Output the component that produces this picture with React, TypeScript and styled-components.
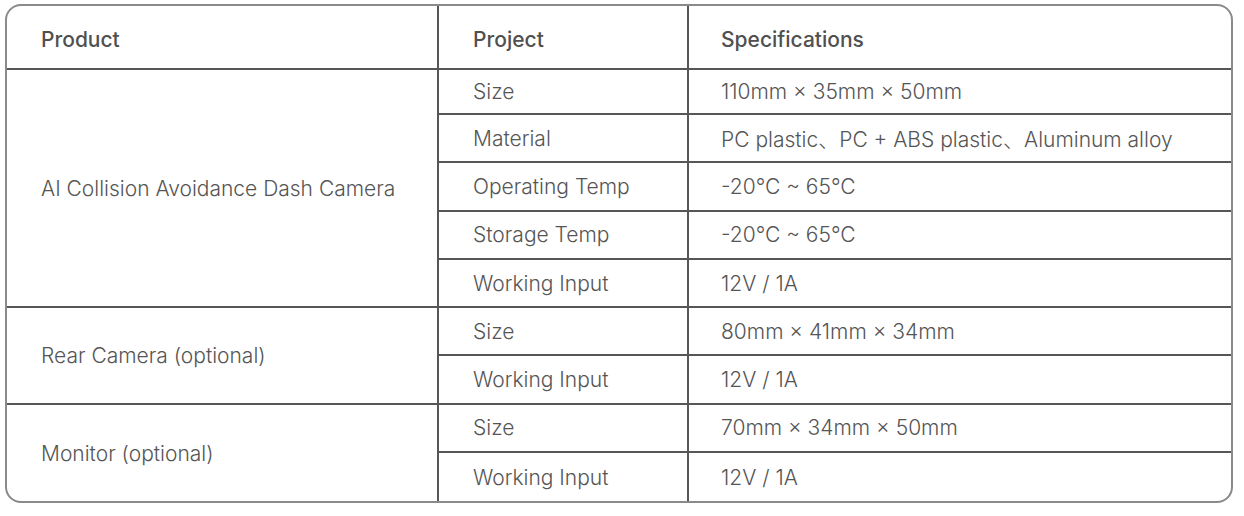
import React from "react";
import styled, { createGlobalStyle } from "styled-components";

interface SpecRow {
  project: string;
  value: string;
}

interface ProductGroup {
  product: string;
  rows: SpecRow[];
}

const groups: ProductGroup[] = [
  {
    product: "AI Collision Avoidance Dash Camera",
    rows: [
      { project: "Size", value: "110mm × 35mm × 50mm" },
      { project: "Material", value: "PC plastic、PC + ABS plastic、Aluminum alloy" },
      { project: "Operating Temp", value: "-20℃ ~ 65℃" },
      { project: "Storage Temp", value: "-20℃ ~ 65℃" },
      { project: "Working Input", value: "12V / 1A" }
    ]
  },
  {
    product: "Rear Camera (optional)",
    rows: [
      { project: "Size", value: "80mm × 41mm × 34mm" },
      { project: "Working Input", value: "12V / 1A" }
    ]
  },
  {
    product: "Monitor (optional)",
    rows: [
      { project: "Size", value: "70mm × 34mm × 50mm" },
      { project: "Working Input", value: "12V / 1A" }
    ]
  }
];

const GlobalStyle = createGlobalStyle`
  body {
    margin: 0;
    background: #ffffff;
    font-family: Inter, "Noto Sans", "Noto Sans CJK SC", sans-serif;
  }
`;

const FrameStyled = styled.div`
  margin: 4px 0 0 5px;
  width: 1228px;
  border: 2px solid #8a8a8a;
  border-radius: 16px;
  overflow: hidden;
  box-sizing: border-box;
`;

const TableStyled = styled.table`
  width: 100%;
  border-collapse: separate;
  border-spacing: 0;
  table-layout: fixed;
`;

const HeadCell = styled.th<{ $pad: number; $last?: boolean }>`
  height: 64px;
  box-sizing: border-box;
  padding: 4px 0 0 ${(p) => p.$pad}px;
  text-align: left;
  font-size: 21px;
  font-weight: 500;
  color: #505050;
  border-bottom: 2px solid #565656;
  border-right: ${(p) => (p.$last ? "none" : "2px solid #565656")};
`;

const RowStyled = styled.tr<{ $first?: boolean }>`
  height: ${(p) => (p.$first ? 45 : 48.3)}px;
`;

const Cell = styled.td<{ $pad: number; $last?: boolean; $noBottom?: boolean }>`
  padding: 0 0 0 ${(p) => p.$pad}px;
  font-size: 21px;
  font-weight: 300;
  color: #555555;
  white-space: nowrap;
  border-bottom: ${(p) => (p.$noBottom ? "none" : "2px solid #565656")};
  border-right: ${(p) => (p.$last ? "none" : "2px solid #565656")};
`;

const App = () => (
  <>
    <GlobalStyle />
    <FrameStyled>
      <TableStyled>
        <colgroup>
          <col style={{ width: 432 }} />
          <col style={{ width: 250 }} />
          <col />
        </colgroup>
        <thead>
          <tr>
            <HeadCell $pad={34}>Product</HeadCell>
            <HeadCell $pad={34}>Project</HeadCell>
            <HeadCell $pad={32} $last>
              Specifications
            </HeadCell>
          </tr>
        </thead>
        <tbody>
          {groups.map((group, gi) =>
            group.rows.map((row, ri) => {
              const lastGroup = gi === groups.length - 1;
              const lastRow = lastGroup && ri === group.rows.length - 1;
              return (
                <RowStyled key={`${gi}-${ri}`} $first={gi === 0 && ri === 0}>
                  {ri === 0 && (
                    <Cell $pad={34} rowSpan={group.rows.length} $noBottom={lastGroup}>
                      {group.product}
                    </Cell>
                  )}
                  <Cell $pad={34} $noBottom={lastRow}>
                    {row.project}
                  </Cell>
                  <Cell $pad={32} $last $noBottom={lastRow}>
                    {row.value}
                  </Cell>
                </RowStyled>
              );
            })
          )}
        </tbody>
      </TableStyled>
    </FrameStyled>
  </>
);

export default App;
